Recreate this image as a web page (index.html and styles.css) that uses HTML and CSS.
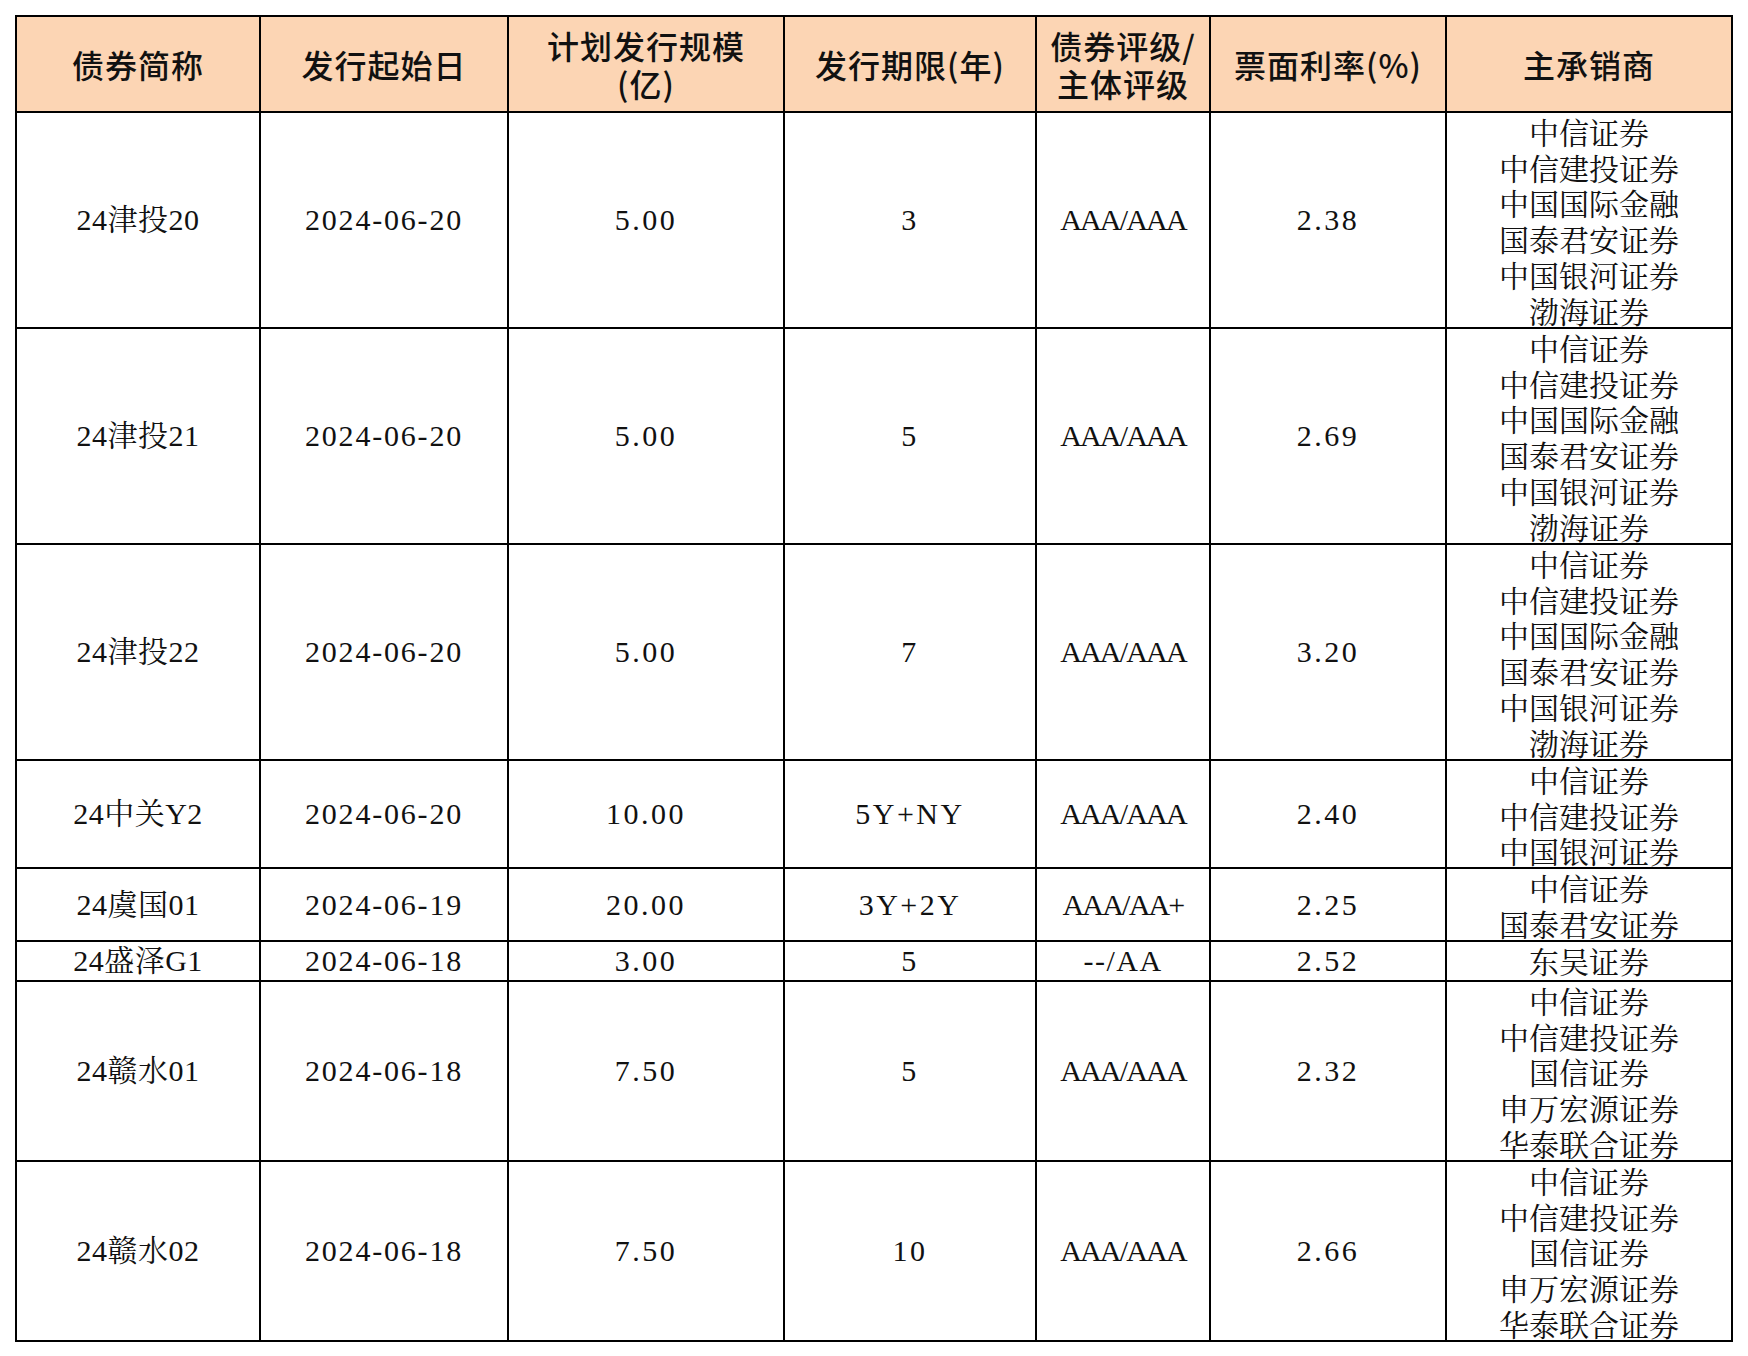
FILE: index.html
```html
<!DOCTYPE html>
<html lang="zh-CN">
<head>
<meta charset="utf-8">
<title>债券发行</title>
<link rel="stylesheet" href="styles.css">
</head>
<body>
<div class="page">
<table class="bonds">
  <colgroup>
    <col class="c1"><col class="c2"><col class="c3"><col class="c4"><col class="c5"><col class="c6"><col class="c7">
  </colgroup>
  <thead>
    <tr>
      <th>债券简称</th>
      <th>发行起始日</th>
      <th>计划发行规模<br>(亿)</th>
      <th>发行期限(年)</th>
      <th>债券评级/<br>主体评级</th>
      <th>票面利率(%)</th>
      <th>主承销商</th>
    </tr>
  </thead>
  <tbody>
    <tr class="h6">
      <td class="nm">24津投20</td><td class="dt">2024-06-20</td><td class="num">5.00</td><td class="num">3</td><td class="rt">AAA/AAA</td><td class="num">2.38</td>
      <td class="uw"><div class="clip">中信证券<br>中信建投证券<br>中国国际金融<br>国泰君安证券<br>中国银河证券<br>渤海证券</div></td>
    </tr>
    <tr class="h6">
      <td class="nm">24津投21</td><td class="dt">2024-06-20</td><td class="num">5.00</td><td class="num">5</td><td class="rt">AAA/AAA</td><td class="num">2.69</td>
      <td class="uw"><div class="clip">中信证券<br>中信建投证券<br>中国国际金融<br>国泰君安证券<br>中国银河证券<br>渤海证券</div></td>
    </tr>
    <tr class="h6">
      <td class="nm">24津投22</td><td class="dt">2024-06-20</td><td class="num">5.00</td><td class="num">7</td><td class="rt">AAA/AAA</td><td class="num">3.20</td>
      <td class="uw"><div class="clip">中信证券<br>中信建投证券<br>中国国际金融<br>国泰君安证券<br>中国银河证券<br>渤海证券</div></td>
    </tr>
    <tr class="h3">
      <td class="nm">24中关Y2</td><td class="dt">2024-06-20</td><td class="num">10.00</td><td class="num">5Y+NY</td><td class="rt">AAA/AAA</td><td class="num">2.40</td>
      <td class="uw"><div class="clip">中信证券<br>中信建投证券<br>中国银河证券</div></td>
    </tr>
    <tr class="h2">
      <td class="nm">24虞国01</td><td class="dt">2024-06-19</td><td class="num">20.00</td><td class="num">3Y+2Y</td><td class="rt">AAA/AA+</td><td class="num">2.25</td>
      <td class="uw"><div class="clip">中信证券<br>国泰君安证券</div></td>
    </tr>
    <tr class="h1">
      <td class="nm">24盛泽G1</td><td class="dt">2024-06-18</td><td class="num">3.00</td><td class="num">5</td><td class="rt-dash">--/AA</td><td class="num">2.52</td>
      <td class="uw"><div class="clip">东吴证券</div></td>
    </tr>
    <tr class="h5">
      <td class="nm">24赣水01</td><td class="dt">2024-06-18</td><td class="num">7.50</td><td class="num">5</td><td class="rt">AAA/AAA</td><td class="num">2.32</td>
      <td class="uw"><div class="clip">中信证券<br>中信建投证券<br>国信证券<br>申万宏源证券<br>华泰联合证券</div></td>
    </tr>
    <tr class="h5">
      <td class="nm">24赣水02</td><td class="dt">2024-06-18</td><td class="num">7.50</td><td class="num">10</td><td class="rt">AAA/AAA</td><td class="num">2.66</td>
      <td class="uw"><div class="clip">中信证券<br>中信建投证券<br>国信证券<br>申万宏源证券<br>华泰联合证券</div></td>
    </tr>
  </tbody>
</table>
</div>
</body>
</html>
```
FILE: styles.css
```css
html, body {
  margin: 0;
  padding: 0;
  background: #ffffff;
}

.page {
  padding: 15px 0 0 15px;
}

.bonds {
  border-collapse: collapse;
  table-layout: fixed;
  width: 1716px;
  font-family: "Liberation Serif", "Noto Serif CJK SC", "Noto Sans CJK SC", serif;
  color: #111;
}

.c1 { width: 244px; }
.c2 { width: 248px; }
.c3 { width: 276px; }
.c4 { width: 252px; }
.c5 { width: 174px; }
.c6 { width: 236px; }
.c7 { width: 286px; }

.bonds th,
.bonds td {
  border: 2px solid #000;
  text-align: center;
  vertical-align: middle;
  padding: 0;
}

.bonds th {
  background: #fcd5b4;
  height: 94px;
  font-family: "Noto Sans CJK SC", sans-serif;
  font-weight: 500;
  font-size: 32px;
  line-height: 38px;
  letter-spacing: 1px;
  color: #111;
}

.bonds td {
  font-size: 30px;
  line-height: 35.7px;
  font-weight: 400;
}

.bonds td.nm { letter-spacing: 0.5px; }
.bonds td.dt { letter-spacing: 1.8px; }
.bonds td.num { letter-spacing: 2.5px; }
.bonds td.rt { letter-spacing: -1.8px; }
.bonds td.rt-dash { letter-spacing: 1.5px; }

.bonds td.uw {
  vertical-align: top;
}

.clip {
  overflow: hidden;
  padding-top: 3px;
  box-sizing: border-box;
}

.h6 td { height: 214px; }
.h6 .clip { height: 214px; }
.h5 td { height: 178px; }
.h5 .clip { height: 178px; }
.h3 td { height: 106px; }
.h3 .clip { height: 106px; }
.h2 td { height: 71px; }
.h2 .clip { height: 71px; }
.h1 td { height: 38px; }
.h1 .clip { height: 38px; }
```
